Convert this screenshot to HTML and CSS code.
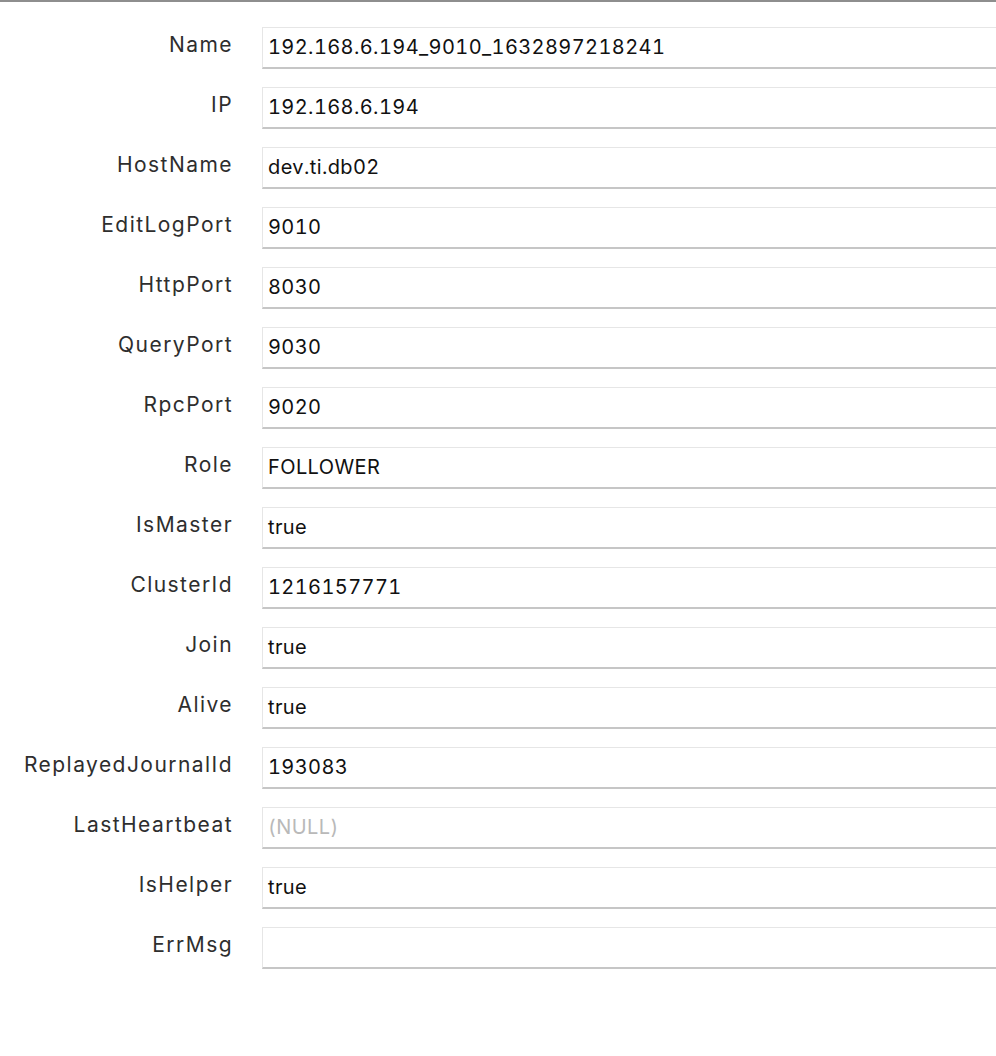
FILE: index.html
```html
<!DOCTYPE html>
<html>
<head>
<meta charset="utf-8">
<link rel="stylesheet" href="styles.css">
</head>
<body>
<div class="page">
  <div class="form">
    <div class="label">Name</div><div class="field">192.168.6.194_9010_1632897218241</div>
    <div class="label">IP</div><div class="field">192.168.6.194</div>
    <div class="label">HostName</div><div class="field">dev.ti.db02</div>
    <div class="label">EditLogPort</div><div class="field">9010</div>
    <div class="label">HttpPort</div><div class="field">8030</div>
    <div class="label">QueryPort</div><div class="field">9030</div>
    <div class="label">RpcPort</div><div class="field">9020</div>
    <div class="label">Role</div><div class="field">FOLLOWER</div>
    <div class="label">IsMaster</div><div class="field">true</div>
    <div class="label">ClusterId</div><div class="field">1216157771</div>
    <div class="label">Join</div><div class="field">true</div>
    <div class="label">Alive</div><div class="field">true</div>
    <div class="label">ReplayedJournalId</div><div class="field">193083</div>
    <div class="label">LastHeartbeat</div><div class="field null">(NULL)</div>
    <div class="label">IsHelper</div><div class="field">true</div>
    <div class="label">ErrMsg</div><div class="field"></div>
  </div>
</div>
</body>
</html>
```
FILE: styles.css
```css
html, body {
  margin: 0;
  padding: 0;
  background: #ffffff;
}
body {
  font-family: Inter, "Liberation Sans", sans-serif;
  width: 996px;
  height: 1056px;
  overflow: hidden;
}
.page {
  border-top: 2px solid #8e8e8e;
  padding-top: 25px;
}
.form {
  display: grid;
  grid-template-columns: 232px 1fr;
  column-gap: 30px;
  row-gap: 18px;
}
.label {
  height: 42px;
  line-height: 35px;
  text-align: right;
  font-size: 21px;
  letter-spacing: 1.45px;
  margin-right: -1px;
  color: #2e2e2e;
}
.field {
  box-sizing: border-box;
  height: 42px;
  border-top: 1px solid #e6e6e6;
  border-left: 1px solid #e6e6e6;
  border-bottom: 2px solid #c6c6c6;
  padding-left: 5px;
  line-height: 38px;
  font-size: 20px;
  letter-spacing: 0.4px;
  font-variant-numeric: tabular-nums;
  color: #111;
}
.field.null {
  color: #b9b9b9;
}
```
